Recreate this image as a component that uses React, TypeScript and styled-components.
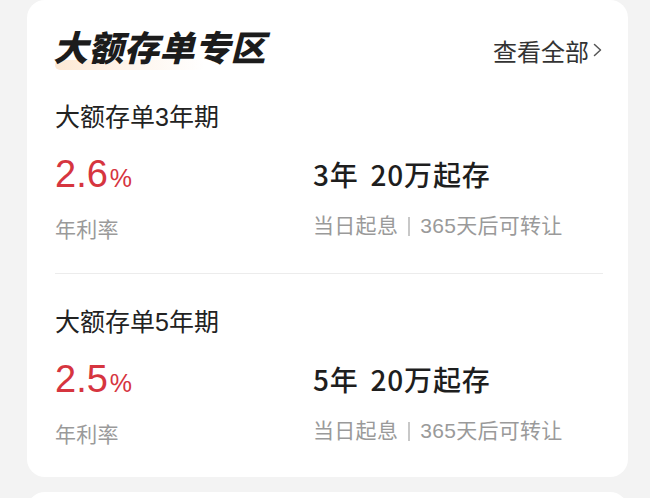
import React from 'react';
import styled, { createGlobalStyle } from 'styled-components';

const GlobalStyle = createGlobalStyle`
	html, body {
		margin: 0;
		padding: 0;
		background: #f3f3f3;
	}
	body {
		font-family: "Liberation Sans", "Noto Sans CJK SC", sans-serif;
		color: #222;
	}
`;

const Page = styled.div`
	display: flex;
	flex-direction: column;
	gap: 15px;
	padding: 0 22px 0 27px;
`;

const Card = styled.div<{ $empty?: boolean }>`
	background: #fff;
	border-radius: 18px;
	padding: 0 25px 28px 28px;
	min-height: ${p => (p.$empty ? '40px' : 'auto')};
`;

const Header = styled.div`
	display: flex;
	justify-content: space-between;
	align-items: center;
	padding-top: 24px;
	height: 44px;
`;

const Title = styled.h2`
	position: relative;
	margin: 0 0 0 -2px;
	font-size: 35px;
	line-height: 44px;
	font-weight: 900;
	font-style: italic;
	letter-spacing: 0.5px;
	color: #1c1c1c;
	font-family: "Noto Sans CJK SC", sans-serif;
	z-index: 0;
	&::after {
		content: '';
		position: absolute;
		left: 2px;
		bottom: -2px;
		width: 150px;
		height: 10px;
		border-radius: 5px;
		background: linear-gradient(90deg, rgba(252, 218, 184, 0.6) 0%, rgba(253, 232, 212, 0.4) 55%, rgba(255, 255, 255, 0) 100%);
		z-index: -1;
	}
`;

const MoreLink = styled.a`
	display: flex;
	align-items: center;
	gap: 3px;
	margin-top: 8px;
	font-size: 24px;
	color: #333;
	text-decoration: none;
	font-family: "Noto Sans CJK SC", sans-serif;
	svg {
		width: 11px;
		height: 16px;
	}
`;

const Item = styled.div`
	padding: 32px 0 29px;
	border-bottom: 1px solid #ececec;
	&:last-child {
		border-bottom: none;
		padding: 31px 0 0;
	}
`;

const ItemName = styled.div`
	font-size: 25px;
	line-height: 34px;
	color: #222;
`;

const Stats = styled.div`
	display: grid;
	grid-template-columns: 258px 1fr;
	margin-top: 20px;
`;

const Col = styled.div`
	display: flex;
	flex-direction: column;
	gap: 18px;
`;

const Rate = styled.div`
	font-size: 38px;
	line-height: 40px;
	color: #d6353f;
	span {
		font-size: 25px;
		margin-left: 2px;
	}
`;

const Term = styled.div`
	display: flex;
	gap: 12px;
	font-size: 28px;
	line-height: 40px;
	font-weight: 500;
	color: #1e1e1e;
	letter-spacing: 0.8px;
	font-family: "Noto Sans CJK SC", sans-serif;
`;

const Label = styled.div`
	font-size: 21px;
	line-height: 28px;
	color: #9a9a9a;
	letter-spacing: 0.3px;
`;

const Sep = styled.span`
	display: inline-block;
	width: 2px;
	height: 19px;
	margin: 0 10px;
	background: #c8c8c8;
	vertical-align: -3px;
`;

interface Product {
	name: string;
	rate: string;
	years: number;
}

const products: Product[] = [
	{ name: '大额存单3年期', rate: '2.6', years: 3 },
	{ name: '大额存单5年期', rate: '2.5', years: 5 },
];

const App = () => (
	<>
		<GlobalStyle />
		<Page>
			<Card>
				<Header>
					<Title>大额存单专区</Title>
					<MoreLink>
						查看全部
						<svg viewBox="0 0 11 16" fill="none">
							<path d="M2.5 2.5 L8.5 8 L2.5 13.5" stroke="#555" strokeWidth="1.5" strokeLinecap="round" strokeLinejoin="round" />
						</svg>
					</MoreLink>
				</Header>
				{products.map(p => (
					<Item key={p.name}>
						<ItemName>{p.name}</ItemName>
						<Stats>
							<Col>
								<Rate>{p.rate}<span>%</span></Rate>
								<Label>年利率</Label>
							</Col>
							<Col>
								<Term><span>{p.years}年</span><span>20万起存</span></Term>
								<Label>当日起息<Sep />365天后可转让</Label>
							</Col>
						</Stats>
					</Item>
				))}
			</Card>
			<Card $empty />
		</Page>
	</>
);

export default App;
